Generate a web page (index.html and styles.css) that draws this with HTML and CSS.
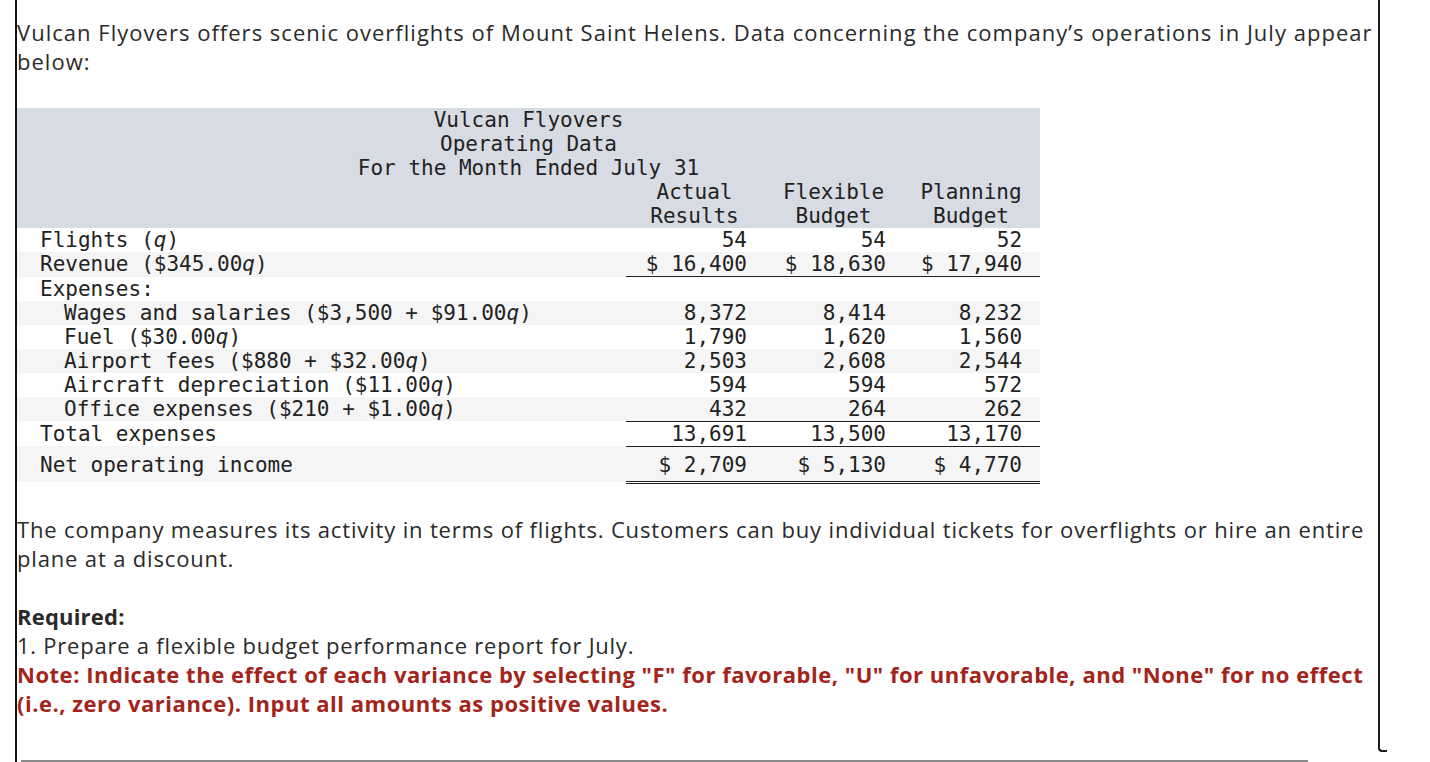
FILE: index.html
```html
<!DOCTYPE html>
<html lang="en">
<head>
<meta charset="utf-8">
<title>Vulcan Flyovers</title>
<link rel="stylesheet" href="styles.css">
</head>
<body>
<div class="frame">
  <div class="main">
    <p class="prose intro">Vulcan Flyovers offers scenic overflights of Mount Saint Helens. Data concerning the company’s operations in July appear below:</p>

    <table class="data">
      <colgroup>
        <col class="c-label">
        <col class="c-num">
        <col class="c-num">
        <col class="c-last">
      </colgroup>
      <thead>
        <tr><th colspan="4" class="title">Vulcan Flyovers</th></tr>
        <tr><th colspan="4" class="title">Operating Data</th></tr>
        <tr><th colspan="4" class="title">For the Month Ended July 31</th></tr>
        <tr>
          <th></th>
          <th class="colhead">Actual<br>Results</th>
          <th class="colhead">Flexible<br>Budget</th>
          <th class="colhead">Planning<br>Budget</th>
        </tr>
      </thead>
      <tbody>
        <tr>
          <td class="label">Flights (<i>q</i>)</td>
          <td class="num">54</td><td class="num">54</td><td class="num">52</td>
        </tr>
        <tr class="shade ruled">
          <td class="label">Revenue ($345.00<i>q</i>)</td>
          <td class="num">$ 16,400</td><td class="num">$ 18,630</td><td class="num">$ 17,940</td>
        </tr>
        <tr>
          <td class="label">Expenses:</td>
          <td></td><td></td><td></td>
        </tr>
        <tr class="shade">
          <td class="label sub">Wages and salaries ($3,500 + $91.00<i>q</i>)</td>
          <td class="num">8,372</td><td class="num">8,414</td><td class="num">8,232</td>
        </tr>
        <tr>
          <td class="label sub">Fuel ($30.00<i>q</i>)</td>
          <td class="num">1,790</td><td class="num">1,620</td><td class="num">1,560</td>
        </tr>
        <tr class="shade">
          <td class="label sub">Airport fees ($880 + $32.00<i>q</i>)</td>
          <td class="num">2,503</td><td class="num">2,608</td><td class="num">2,544</td>
        </tr>
        <tr>
          <td class="label sub">Aircraft depreciation ($11.00<i>q</i>)</td>
          <td class="num">594</td><td class="num">594</td><td class="num">572</td>
        </tr>
        <tr class="shade">
          <td class="label sub">Office expenses ($210 + $1.00<i>q</i>)</td>
          <td class="num">432</td><td class="num">264</td><td class="num">262</td>
        </tr>
        <tr class="total">
          <td class="label">Total expenses</td>
          <td class="num">13,691</td><td class="num">13,500</td><td class="num">13,170</td>
        </tr>
        <tr class="shade net">
          <td class="label">Net operating income</td>
          <td class="num">$ 2,709</td><td class="num">$ 5,130</td><td class="num">$ 4,770</td>
        </tr>
      </tbody>
    </table>

    <p class="prose after">The company measures its activity in terms of flights. Customers can buy individual tickets for overflights or hire an entire plane at a discount.</p>

    <p class="prose req"><strong>Required:</strong><br>1. Prepare a flexible budget performance report for July.<br><span class="note">Note: Indicate the effect of each variance by selecting "F" for favorable, "U" for unfavorable, and "None" for no effect (i.e., zero variance). Input all amounts as positive values.</span></p>

    <div class="rule"></div>
  </div>
  <div class="bracket"></div>
</div>
</body>
</html>
```

FILE: styles.css
```css
html, body {
  margin: 0;
  padding: 0;
  background: #ffffff;
}

.frame {
  display: flex;
  align-items: flex-start;
  margin-left: 15px;
  height: 762px;
  border-left: 2px solid #111111;
  overflow: hidden;
}

.main {
  display: flex;
  flex-direction: column;
  width: 1361px;
  height: 762px;
}

.bracket {
  width: 7px;
  height: 750px;
  border-left: 2px solid #1a1a1a;
  border-bottom: 2px solid #1a1a1a;
  border-bottom-left-radius: 4px;
}

.prose {
  margin: 0;
  font-family: "Open Sans", "Liberation Sans", sans-serif;
  font-size: 22px;
  line-height: 29px;
  letter-spacing: 0.6px;
  color: #2a2a2a;
}

.intro {
  padding-top: 18px;
  letter-spacing: 1.02px;
}

.data {
  margin-top: 32px;
  width: 1023px;
  table-layout: fixed;
  border-collapse: collapse;
  font-family: "DejaVu Sans Mono", monospace;
  font-size: 21px;
  line-height: 24px;
  letter-spacing: 0;
  color: #222222;
}

.c-label { width: 609px; }
.c-num { width: 139px; }
.c-last { width: 136px; }

.data th,
.data td {
  padding: 0;
  font-weight: normal;
  white-space: nowrap;
}

.data thead th {
  background: #d7dce4;
}

.data th.title {
  text-align: center;
}

.data th.colhead {
  text-align: center;
  padding-right: 2px;
}

.data i {
  font-style: italic;
}

.label {
  padding-left: 23px !important;
  text-align: left;
}

.label.sub {
  padding-left: 47px !important;
}

.num {
  text-align: right;
  padding-right: 18px !important;
}

.shade td {
  background: #f5f5f5;
}

.ruled td.num {
  border-bottom: 1px solid #222222;
}

.total td.num {
  border-top: 1px solid #222222;
}

.net td {
  height: 32px;
  padding-top: 2px;
}

.net td.num {
  border-top: 1px solid #222222;
  border-bottom: 3px double #222222;
}

.after {
  margin-top: 31px;
  letter-spacing: 0.84px;
}

.req {
  margin-top: 29px;
  letter-spacing: 0.76px;
}

.req strong {
  font-weight: 700;
  letter-spacing: 0.2px;
}

.note {
  color: #a3241b;
  font-weight: 700;
  letter-spacing: 0.52px;
}

.rule {
  margin-top: auto;
  margin-left: 4px;
  width: 1287px;
  height: 2px;
  background: #8a8a8a;
}
```
